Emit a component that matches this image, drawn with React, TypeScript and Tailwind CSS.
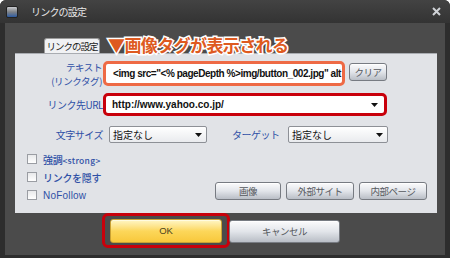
const jp = "font-['Noto_Sans_CJK_JP','Noto_Sans',sans-serif]";

function Caret() {
  return (
    <svg width="7" height="4" viewBox="0 0 7 4" className="shrink-0">
      <path d="M0 0h7L3.5 4z" fill="#111" />
    </svg>
  );
}

function Select({ w, value }: { w: string; value: string }) {
  return (
    <div
      className={`${w} h-[17px] flex items-center justify-between pl-[3px] pr-[4px] rounded-[2px] border border-[#8d9096] bg-gradient-to-b from-white to-[#e9ebee] text-[10px] text-[#111] ${jp}`}
    >
      <span className="leading-none">{value}</span>
      <Caret />
    </div>
  );
}

function GrayButton({ w, h, label }: { w: string; h: string; label: string }) {
  return (
    <div
      className={`${w} ${h} flex items-center justify-center rounded-[3px] border border-[#777b82] bg-gradient-to-b from-[#fbfbfc] via-[#e2e5ea] to-[#b9bec6] shadow-[inset_0_1px_0_#fff] text-[9.5px] text-[#55585d] tracking-[-0.5px] ${jp}`}
    >
      {label}
    </div>
  );
}

function Check({ children }: { children: React.ReactNode }) {
  return (
    <div className="flex items-center gap-[6px] h-[10px]">
      <div className="w-[10px] h-[10px] border border-[#9a9da3] bg-gradient-to-b from-[#e8e9eb] to-white" />
      <span className={`text-[10px] font-medium text-[#2f50a6] tracking-[-0.3px] ${jp}`}>{children}</span>
    </div>
  );
}

export default function App() {
  return (
    <div className="w-[450px] h-[258px] bg-white">
      <div className="w-full h-full rounded-t-[6px] bg-[#2d2d2d] flex flex-col overflow-hidden">
        {/* TITLE BAR */}
        <div className="h-[23px] shrink-0 flex items-center pl-[6px] pr-[9px] bg-gradient-to-b from-[#434343] to-[#333]">
          <div className="w-[12px] h-[12px] rounded-[2px] bg-gradient-to-b from-[#c9cbcf] via-[#7d8186] to-[#2c5aa0] border border-[#222]" />
          <span className={`ml-[13px] text-[10px] text-[#e8e8e8] tracking-[-0.8px] ${jp}`}>リンクの設定</span>
          <svg width="9" height="9" viewBox="0 0 9 9" className="ml-auto">
            <path d="M1 1l7 7M8 1L1 8" stroke="#cfd2d6" strokeWidth="2" />
          </svg>
        </div>

        {/* BODY */}
        <div className="flex-1 mx-[5px] mb-[3px] bg-[#4b4b4b] flex flex-col pl-[10px] pr-[8px] pt-[15px]">
          {/* TAB ROW */}
          <div className="relative h-[15px] flex items-end">
            <div className={`ml-[29px] w-[56px] h-[15px] flex items-center justify-center rounded-t-[3px] border border-b-0 border-[#9a9a9a] bg-[#f1f2f4] text-[9.5px] text-[#222] tracking-[-1px] ${jp}`}>
              リンクの設定
            </div>
            <span
              className={`absolute left-[93px] top-[-2px] text-[17px] font-bold leading-none text-[#de5a20] tracking-[-0.6px] [paint-order:stroke_fill] [-webkit-text-stroke:3px_white] z-10 ${jp}`}
            >
              ▼画像タグが表示される
            </span>
          </div>

          {/* PANEL */}
          <div className="h-[160px] bg-[#e1e3e7] border-t border-[#a9acb1] flex flex-col pt-[7px]">
            {/* ROW 1 */}
            <div className="flex items-start">
              <div className={`w-[88px] pr-[1px] -mt-[1px] flex flex-col items-end text-[9.5px] leading-[14px] text-[#2f50a6] tracking-[-0.4px] ${jp}`}>
                <span>テキスト</span>
                <span>(リンクタグ)</span>
              </div>
              <div className="w-[242px] h-[25px] rounded-[5px] border-[3px] border-[#ee6a45] bg-white flex items-center pl-[7px] overflow-hidden">
                <span className="whitespace-nowrap text-[10px] font-bold text-[#111] tracking-[-0.45px] font-['Liberation_Sans',sans-serif]">
                  &lt;img src="&lt;% pageDepth %&gt;img/button_002.jpg" alt
                </span>
              </div>
              <div className="ml-[4px] mt-[2px]">
                <GrayButton w="w-[38px]" h="h-[18px]" label="クリア" />
              </div>
            </div>

            {/* ROW 2 */}
            <div className="flex items-center mt-[5px]">
              <div className={`w-[88px] text-right text-[10px] text-[#2f50a6] tracking-[-0.5px] ${jp}`}>リンク先URL</div>
              <div className="w-[284px] h-[23px] rounded-[5px] border-[3px] border-[#c8000b] bg-white flex items-center justify-between pl-[6px] pr-[6px]">
                <span className="text-[10px] font-bold text-[#111] font-['Liberation_Sans',sans-serif]">http://www.yahoo.co.jp/</span>
                <Caret />
              </div>
            </div>

            {/* ROW 3 */}
            <div className="flex items-center mt-[10px]">
              <div className={`w-[88px] text-right text-[10px] text-[#2f50a6] tracking-[-0.5px] ${jp}`}>文字サイズ</div>
              <div className="ml-[6px]">
                <Select w="w-[98px]" value="指定なし" />
              </div>
              <div className={`ml-[25px] w-[50px] text-[10px] text-[#2f50a6] tracking-[-0.5px] ${jp}`}>ターゲット</div>
              <div className="ml-[6px]">
                <Select w="w-[100px]" value="指定なし" />
              </div>
            </div>

            {/* CHECKS + BUTTONS */}
            <div className="flex items-start mt-[11px]">
              <div className="pl-[12px] flex flex-col gap-[8px]">
                <Check>
                  強調<span className="text-[8.5px] tracking-[0.3px]">&lt;strong&gt;</span>
                </Check>
                <Check>リンクを隠す</Check>
                <Check>
                  <span className="font-['Liberation_Sans',sans-serif] text-[10px] tracking-[0.2px]">NoFollow</span>
                </Check>
              </div>
              <div className="ml-auto mr-[10px] mt-[28px] flex gap-[5px]">
                <GrayButton w="w-[66px]" h="h-[18px]" label="画像" />
                <GrayButton w="w-[68px]" h="h-[18px]" label="外部サイト" />
                <GrayButton w="w-[68px]" h="h-[18px]" label="内部ページ" />
              </div>
            </div>
          </div>

          {/* FOOTER */}
          <div className="flex items-start pl-[87px]">
            <div className="rounded-[6px] border-[3px] border-[#c8000b] px-[5px] pt-[3px] pb-[2px]">
              <div className="w-[112px] h-[24px] flex items-center justify-center rounded-[3px] border border-[#c9a133] bg-gradient-to-b from-[#fff6c4] via-[#fcd75a] to-[#f8c83a] shadow-[inset_0_1px_0_#fffbe0] text-[9.5px] text-[#4b4322] font-['Liberation_Sans',sans-serif]">
                OK
              </div>
            </div>
            <div className="ml-[-1px] mt-[7px]">
              <GrayButton w="w-[111px]" h="h-[23px]" label="キャンセル" />
            </div>
          </div>
        </div>
      </div>
    </div>
  );
}
